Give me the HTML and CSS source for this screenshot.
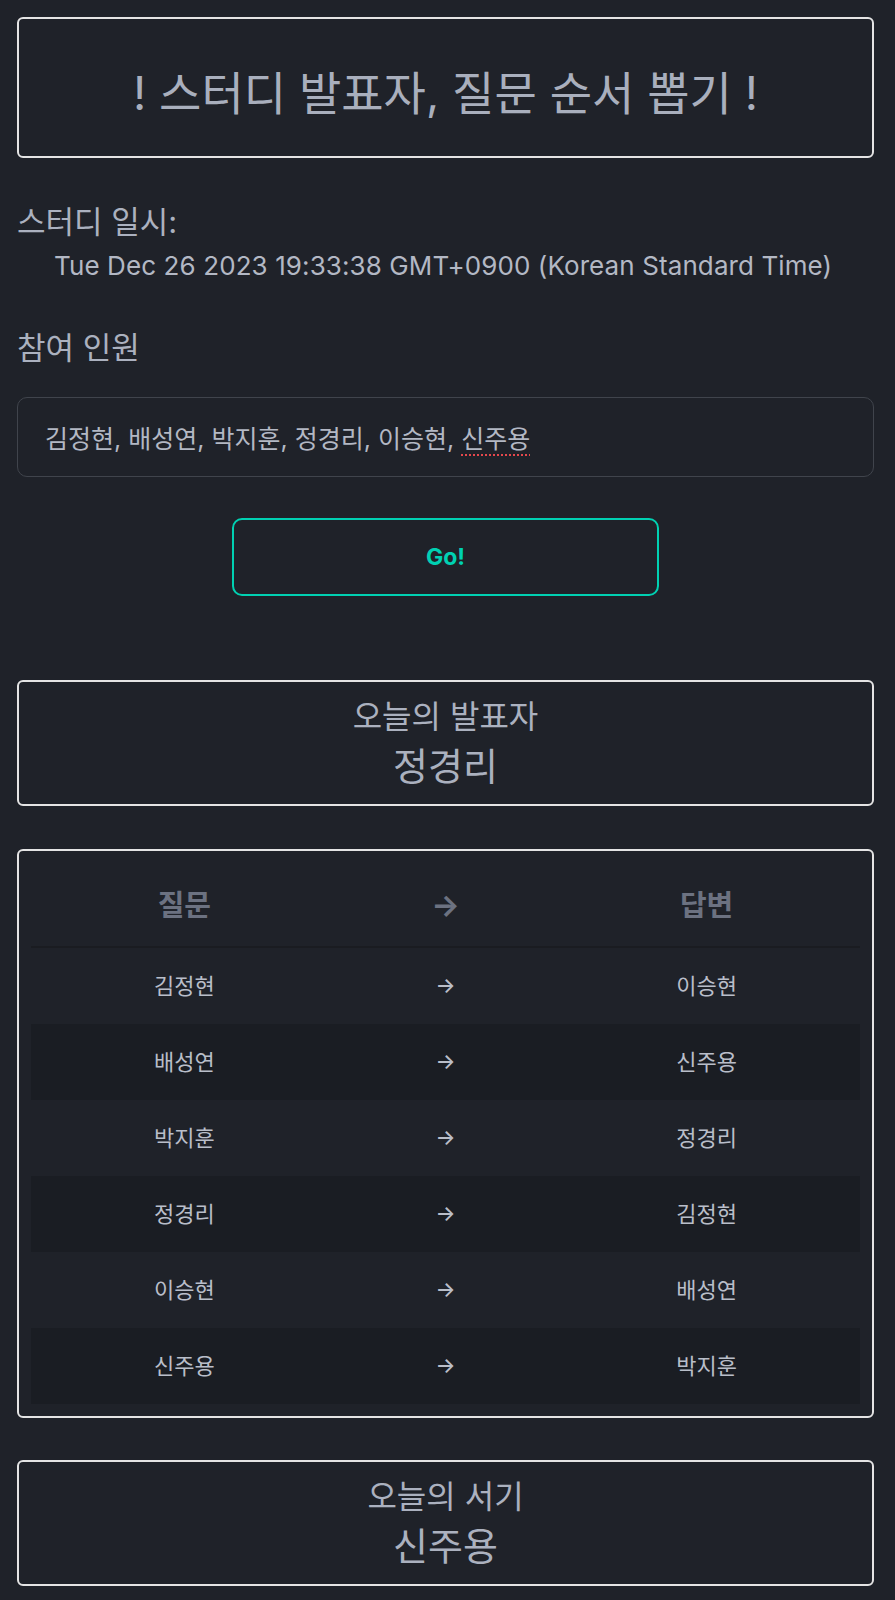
FILE: index.html
```html
<!DOCTYPE html>
<html lang="ko">
<head>
<meta charset="utf-8">
<title>스터디 발표자, 질문 순서 뽑기</title>
<link rel="stylesheet" href="styles.css">
</head>
<body>
<main class="page">
  <header class="title-box">
    <h1 class="title">! 스터디 발표자, 질문 순서 뽑기 !</h1>
  </header>

  <section class="meta">
    <h2 class="label label-date">스터디 일시:</h2>
    <p class="date">Tue Dec 26 2023 19:33:38 GMT+0900 (Korean Standard Time)</p>
    <h2 class="label label-members">참여 인원</h2>
    <div class="members-input" role="textbox">김정현, 배성연, 박지훈, 정경리, 이승현, <span class="misspelled">신주용</span></div>
    <div class="go-wrap"><button class="go-btn" type="button">Go!</button></div>
  </section>

  <section class="result-box presenter">
    <p class="result-label">오늘의 발표자</p>
    <p class="result-name">정경리</p>
  </section>

  <section class="table-box">
    <table class="qa-table">
      <colgroup><col class="c-side"><col class="c-mid"><col class="c-side"></colgroup>
      <thead>
        <tr><th>질문</th><th class="arrow-h">→</th><th>답변</th></tr>
      </thead>
      <tbody>
        <tr><td>김정현</td><td class="arrow">→</td><td>이승현</td></tr>
        <tr><td>배성연</td><td class="arrow">→</td><td>신주용</td></tr>
        <tr><td>박지훈</td><td class="arrow">→</td><td>정경리</td></tr>
        <tr><td>정경리</td><td class="arrow">→</td><td>김정현</td></tr>
        <tr><td>이승현</td><td class="arrow">→</td><td>배성연</td></tr>
        <tr><td>신주용</td><td class="arrow">→</td><td>박지훈</td></tr>
      </tbody>
    </table>
  </section>

  <section class="result-box scribe">
    <p class="result-label">오늘의 서기</p>
    <p class="result-name">신주용</p>
  </section>
</main>
</body>
</html>
```
FILE: styles.css
```css
html, body {
  margin: 0;
  padding: 0;
  background: #1f2229;
}
body {
  font-family: "Inter", "Noto Sans CJK KR", sans-serif;
  color: #abb1bf;
}
.page {
  padding: 17px 21px 15px 17px;
}
h1, h2, p { margin: 0; font-weight: 400; }

.title-box {
  border: 2px solid #e4e4e4;
  border-radius: 6px;
  padding: 48px 0 36px;
  text-align: center;
}
.title {
  font-size: 46px;
  line-height: 53px;
  color: #a9afbd;
}

.label {
  font-size: 31px;
  line-height: 36px;
  color: #abb1bf;
}
.label-date { margin-top: 46px; }
.date {
  margin-top: 10px;
  padding-left: 37px;
  font-size: 26px;
  line-height: 32px;
  letter-spacing: 0.1px;
  color: #b3b8c4;
}
.label-members { margin-top: 48px; }

.members-input {
  margin-top: 31px;
  height: 78px;
  border: 1px solid #40444c;
  border-radius: 10px;
  padding: 0 27px;
  display: flex;
  align-items: center;
  font-size: 25px;
  color: #b3b8c4;
  white-space: pre;
}
.misspelled {
  text-decoration: underline dotted #e5484d;
  text-decoration-thickness: 2px;
  text-underline-offset: 6px;
}

.go-wrap {
  margin-top: 41px;
  display: flex;
  justify-content: center;
}
.go-btn {
  width: 427px;
  height: 78px;
  background: transparent;
  border: 2px solid #00d1b2;
  border-radius: 10px;
  color: #00d1b2;
  font-family: "Inter", "Noto Sans CJK KR", sans-serif;
  font-size: 23px;
  font-weight: 700;
}

.result-box {
  border: 2px solid #e4e4e4;
  border-radius: 6px;
  padding: 12px 0 11px;
  text-align: center;
}
.presenter { margin-top: 84px; }
.scribe { margin-top: 42px; }
.result-label {
  font-size: 32px;
  line-height: 45px;
  color: #abb1bf;
}
.result-name {
  font-size: 38px;
  line-height: 54px;
  color: #abb1bf;
}

.table-box {
  margin-top: 43px;
  border: 2px solid #e4e4e4;
  border-radius: 6px;
  padding: 12px;
}
.qa-table {
  width: 100%;
  border-collapse: collapse;
  table-layout: fixed;
  text-align: center;
}
.c-side { width: 37%; }
.c-mid { width: 26%; }
.qa-table th {
  font-size: 29px;
  line-height: 39px;
  font-weight: 700;
  color: #6c7281;
  padding: 23px 0 21px;
  border-bottom: 2px solid #1a1c21;
}
.qa-table th.arrow-h { font-size: 30px; }
.qa-table td {
  font-size: 22px;
  line-height: 30px;
  color: #b9bec9;
  padding: 23px 0;
}
.qa-table td.arrow { font-size: 21px; font-weight: 500; }
.qa-table tbody tr:nth-child(even) td {
  background: #1a1d23;
}
```
